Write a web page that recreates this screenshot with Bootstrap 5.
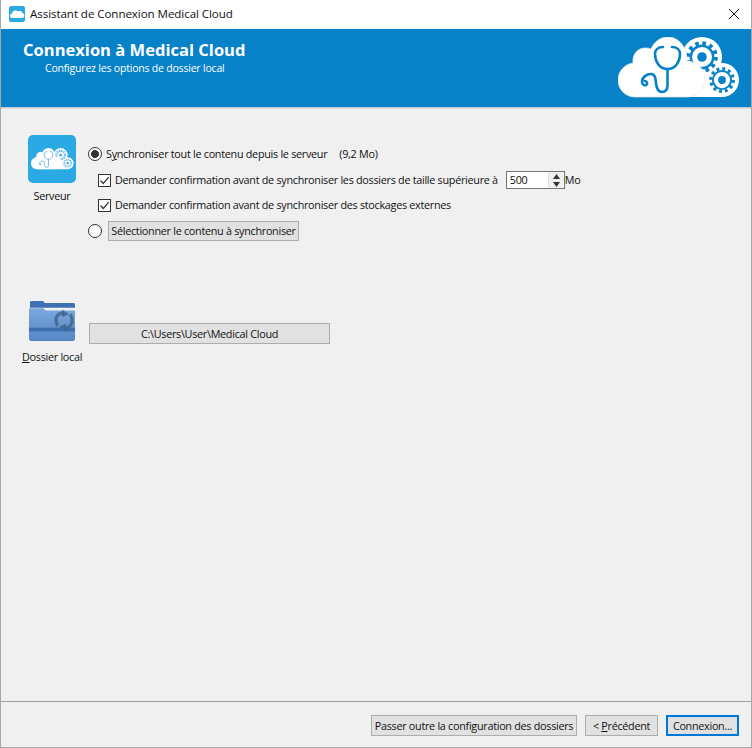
<!DOCTYPE html>
<html lang="fr">
<head>
<meta charset="utf-8">
<title>Assistant de Connexion Medical Cloud</title>
<link href="https://cdn.jsdelivr.net/npm/bootstrap@5.3.0/dist/css/bootstrap.min.css" rel="stylesheet">
<style>
html,body{height:748px;overflow:hidden}
body{background:#f0f0f0;color:#111;font-family:"Open Sans","Noto Sans",sans-serif;font-size:10.8px;letter-spacing:-.28px;line-height:16px}
.win{height:748px;border-left:1px solid #a8a8a8;border-right:1px solid #a8a8a8;border-bottom:1px solid #a8a8a8}
.titlebar{height:29px;background:#fff;padding:0 11px 2px 8px}
.tb-ico{width:16px;height:16px;margin-right:5px}
.tb-text{font-size:11.6px;letter-spacing:-.08px}
.closex{width:12px;height:12px}
.hero{height:78px;background:#0782c9;color:#fff;padding:0 11px 0 22px}
.hero-title{font-size:16.5px;font-weight:700;line-height:20px;margin-top:11px;letter-spacing:.02px}
.hero-sub{font-size:10.5px;letter-spacing:-.2px;line-height:14px;padding-left:22px;margin-top:1px}
.hero-logo{width:122px;height:62px;margin-top:8px;--gc:#0782c9}
.rule{height:2px;background:#dcdcdc;border-top:1px solid #c8c8c8}
.main{padding-top:26px;padding-left:21px}
.sidecol{width:60px;flex:none;margin-right:6px}
.srv-ico{width:48px;height:48px;background:#2aa9e4;border-radius:5px}
.srv-logo{width:43px;height:22px;--gc:#62b6e6}
.sidelabel{margin-top:5px;white-space:nowrap}
.opts{padding-top:7px}
.optline{height:24px;white-space:nowrap}
.optthird{margin-top:1px}
.optlast{margin-top:2px}
.ml-chk{margin-left:10px}
input.wr{appearance:none;-webkit-appearance:none;width:13px;height:13px;margin:0 4px 0 0;background:#fff;border:1px solid #333;flex:none;background-repeat:no-repeat;background-position:center}
input.wr[type=radio]{border-radius:50%;width:14px;height:14px;margin-right:4px}
input.wr[type=radio]:checked{background-image:radial-gradient(circle at center,#333 0,#333 3.6px,transparent 4.2px)}
input.wr[type=checkbox]:checked{background-image:url("data:image/svg+xml,%3Csvg xmlns='http://www.w3.org/2000/svg' viewBox='0 0 11 11'%3E%3Cpath d='M1.5 5.5 4.3 8.5 9.7 2.2' fill='none' stroke='%23333' stroke-width='1.2'/%3E%3C/svg%3E")}
.winbtn{background:#e1e1e1;border:1px solid #adadad;border-radius:0;color:#111;line-height:16px;padding:1px 0;white-space:nowrap;letter-spacing:-.28px}
.sel-btn{width:191px;height:20px;margin-left:2px;line-height:16px;padding:1px 0}
.spin{width:59px;height:18px;background:#fff;border:1px solid #777;margin-left:8px;padding-left:3px}
.spin-btns{width:16px;height:16px;border-left:1px solid #ddd;background:#f0f0f0}
.spin-btns svg{width:7px;height:5px;margin:1.5px auto}
.gap-section{margin-top:59px}
.folder{width:46px;height:40px;margin:1px 0 0 7px}
.sidecol2{width:60px;flex:none}
.path-btn{width:241px;height:21px;margin-left:7px;margin-top:23px}
.sidelabel2{margin-top:8px}
.foot{border-top:1px solid #a0a0a0;height:46px;padding:13px 12px 0 0}
.b1{width:206px;height:21px}.b2{width:73px;height:21px}
.b3{width:73px;height:21px;border:2px solid #0078d7;padding:0}
.gapb{gap:8px}
</style>
</head>
<body>
<svg width="0" height="0" class="d-block" aria-hidden="true">
<defs>
<symbol id="gear" viewBox="-12 -12 24 24">
<circle r="8.4" fill="none" stroke="var(--gc)" stroke-width="1.8"/>
<circle r="10.4" fill="none" stroke="var(--gc)" stroke-width="3" stroke-dasharray="2.7 2.74"/>
<circle r="3.6" fill="var(--gc)"/>
</symbol>
<symbol id="cloudlogo" viewBox="0 0 122 62">
<circle cx="84" cy="20" r="20" fill="#fff"/>
<circle cx="104" cy="43" r="17" fill="#fff"/>
<rect x="70" y="36" width="34" height="24" fill="#fff"/>
<use href="#gear" x="68" y="4" width="32" height="32"/>
<use href="#gear" x="91" y="30" width="26" height="26"/>
<path fill="#fff" stroke="#e6e6e6" stroke-width=".7" d="M17 60C7 60 0 52 0 43c0-9 7-16 15-17-1-9 5-15 12-15 2 0 4 0 6 1C36 5 42 0 50 0c9 0 16 7 18 16 1 3 1 6 0 8 11 0 19 8 19 18 0 10-8 18-18 18z"/>
<g fill="none" stroke="var(--gc)" stroke-width="2.600" stroke-linecap="round">
<path d="M45 10c-5 0-8 3-8 7 0 4 1 7 3 10 2 3 5 5 9.500 5s7.500-2 9.500-5c2-3 3-6 3-10 0-4-3-7-8-7"/>
<path d="M49.500 32V48C49.500 53 47 55 44 55 40 55 38.500 51 38 46 37.500 41 37 37 33 37 29 37 24 40 24 45 24 47 26 49 28 48 30 47 29 44 27 44"/>
</g>
</symbol>
<linearGradient id="fgrad" x1="0" y1="0" x2="0" y2="1"><stop offset="0" stop-color="#7ba7dc"/><stop offset="1" stop-color="#5586c5"/></linearGradient>
</defs>
</svg>
<div class="win d-flex flex-column">
  <div class="titlebar d-flex align-items-center">
    <svg class="tb-ico" viewBox="0 0 16 16"><rect width="16" height="16" rx="2" fill="#2aa9e4"/><path fill="#fff" d="M3.500 12C2 12 1 11 1 9.700 1 8.500 2 7.500 3 7.500 3.300 5.800 4.500 4.500 6.500 4.500c1 0 2 .5 2.500 1 1.500-1 4-.5 4.300 1.500 1.200 0 2 1 2 2.300C15.300 11 14.300 12 13 12z"/></svg>
    <span class="tb-text flex-grow-1">Assistant de Connexion Medical Cloud</span>
    <svg class="closex" viewBox="0 0 12 12"><path d="M1 1 11 11M11 1 1 11" stroke="#111" stroke-width="1" fill="none"/></svg>
  </div>
  <div class="hero d-flex justify-content-between">
    <div>
      <div class="hero-title">Connexion à Medical Cloud</div>
      <div class="hero-sub">Configurez les options de dossier local</div>
    </div>
    <svg class="hero-logo"><use href="#cloudlogo"/></svg>
  </div>
  <div class="rule"></div>
  <div class="main flex-grow-1">
    <div class="d-flex">
      <div class="sidecol d-flex flex-column align-items-center">
        <div class="srv-ico d-flex align-items-center justify-content-center">
          <svg class="srv-logo"><use href="#cloudlogo"/></svg>
        </div>
        <div class="sidelabel">Serveur</div>
      </div>
      <div class="opts">
        <div class="optline d-flex align-items-center"><input class="wr" type="radio" name="s" checked><span><span>S<u>y</u>nchroniser tout le contenu depuis le serveur</span><span class="ms-2 ps-1">(9,2 Mo)</span></span></div>
        <div class="optline d-flex align-items-center ml-chk pt-1"><input class="wr" type="checkbox" checked><span>Demander confirmation avant de synchroniser les dossiers de taille supérieure à</span>
          <span class="spin d-flex align-items-center justify-content-between"><span>500</span><span class="spin-btns d-flex flex-column"><svg viewBox="0 0 7 5"><path d="M3.500 0 7 5H0z" fill="#333"/></svg><svg viewBox="0 0 7 5"><path d="M0 0H7L3.500 5z" fill="#333"/></svg></span></span><span>Mo</span></div>
        <div class="optline optthird d-flex align-items-center ml-chk pt-1"><input class="wr" type="checkbox" checked><span>Demander confirmation avant de synchroniser des stockages externes</span></div>
        <div class="optline optlast d-flex align-items-center pt-1"><input class="wr" type="radio" name="s"><button type="button" class="winbtn sel-btn">Sélectionner le contenu à synchroniser</button></div>
      </div>
    </div>
    <div class="d-flex gap-section">
      <div class="sidecol2 d-flex flex-column align-items-start">
        <svg class="folder" viewBox="0 0 46 42" preserveAspectRatio="none">
          <path d="M1 1.500C1 .700 1.700 0 2.500 0H14l2 2h28.500c.8 0 1.500.7 1.500 1.500V7H1z" fill="#3f70b3"/>
          <path d="M0 9 .5 7.500H14l3 2.500h28c.6 0 1 .4 1 1v29c0 1-.8 2-2 2H2c-1.200 0-2-1-2-2z" fill="url(#fgrad)"/>
          <rect y="28" width="46" height="4" fill="#3d6fb0"/>
          <g fill="none" stroke="#43658f" stroke-width="3.400" opacity=".85"><path d="M35 13c-5-1-8 3-8 7 0 3 1 5 2 6"/><path d="M35 28c5 1 8-3 8-7 0-3-1-6-2-7"/></g>
          <path d="M33 9v8l7-3zM37 32v-8l-7 3z" fill="#43658f" opacity=".85"/>
        </svg>
        <div class="sidelabel sidelabel2"><u>D</u>ossier local</div>
      </div>
      <button type="button" class="winbtn path-btn">C:\Users\User\Medical Cloud</button>
    </div>
  </div>
  <div class="foot d-flex justify-content-end gapb">
    <button type="button" class="winbtn b1">Passer outre la configuration des dossiers</button>
    <button type="button" class="winbtn b2">&lt; <u>P</u>récédent</button>
    <button type="button" class="winbtn b3">Connexion...</button>
  </div>
</div>
</body>
</html>
